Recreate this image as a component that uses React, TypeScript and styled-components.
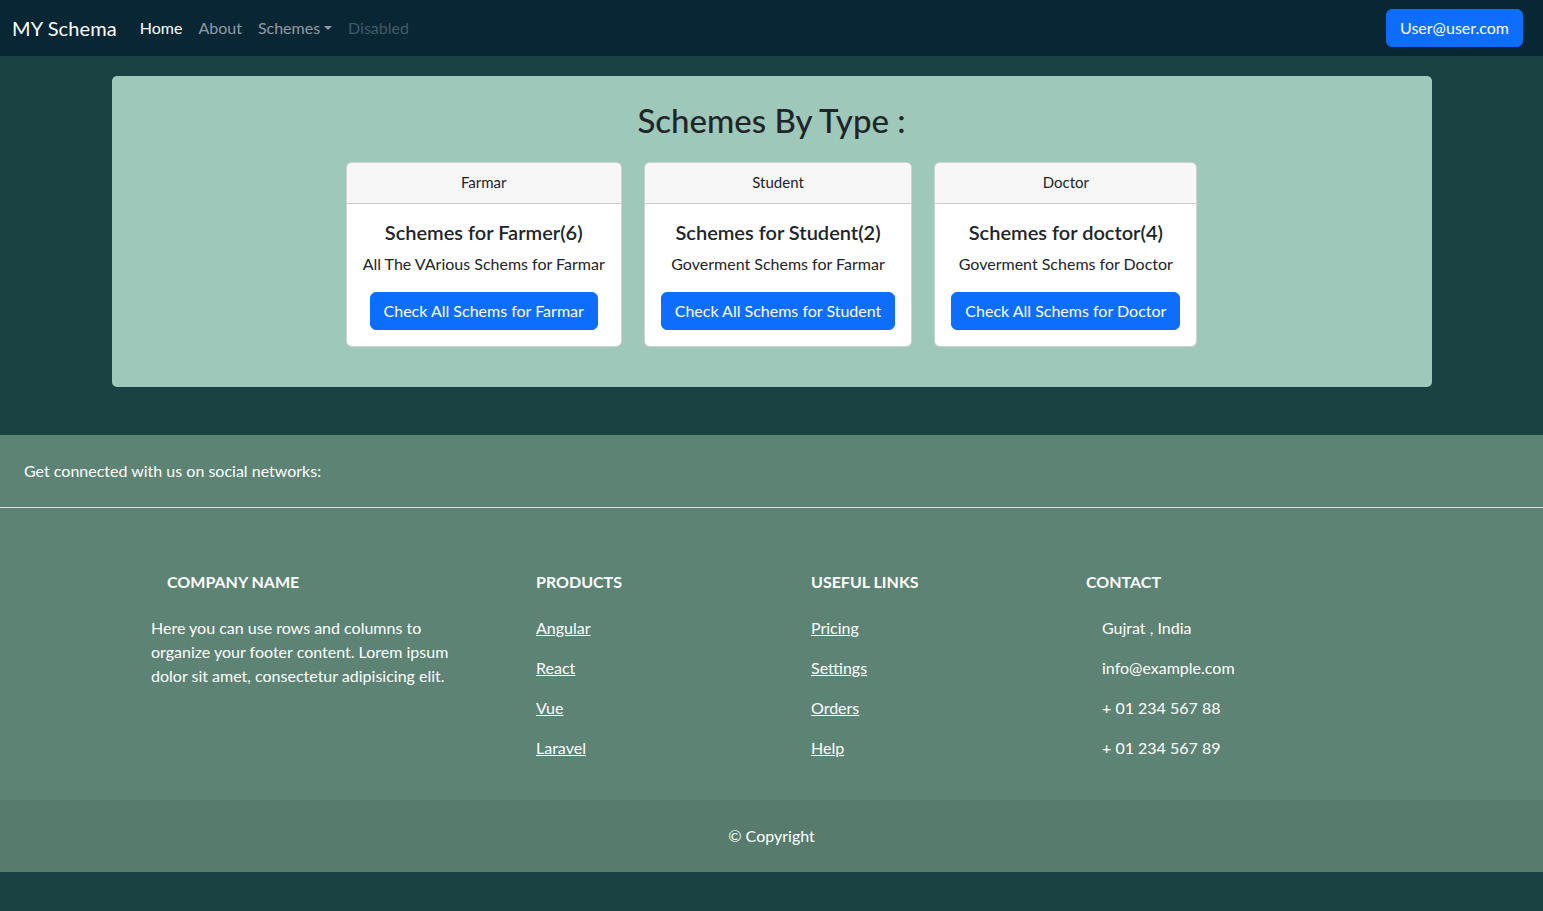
import React from "react";
import styled, { createGlobalStyle } from "styled-components";

const GlobalStyle = createGlobalStyle`
  *, *::before, *::after { box-sizing: border-box; }
  body {
    margin: 0;
    background: #1b4242;
    font-family: "Lato", "Noto Sans", sans-serif;
    font-size: 16px;
    line-height: 1.5;
    color: #212529;
  }
`;

const Page = styled.div`
  min-height: 911px;
  background: #1b4242;
`;

const Navbar = styled.nav`
  height: 56px;
  background: #092635;
  display: flex;
  align-items: center;
  padding: 0 20px 0 12px;
`;

const Brand = styled.a`
  font-size: 20px;
  color: #fff;
  text-decoration: none;
  margin-right: 15px;
  padding: 5px 0;
  letter-spacing: 0.1px;
`;

const NavList = styled.div`
  display: flex;
  align-items: center;
  flex: 1;
`;

const NavLink = styled.a<{ $state?: "active" | "disabled" }>`
  padding: 8px;
  font-size: 16px;
  text-decoration: none;
  color: ${(p) =>
    p.$state === "active"
      ? "#fff"
      : p.$state === "disabled"
      ? "rgba(255,255,255,0.25)"
      : "rgba(255,255,255,0.55)"};
  display: flex;
  align-items: center;
`;

const Caret = styled.span`
  display: inline-block;
  margin-left: 4px;
  border-top: 4.8px solid currentColor;
  border-left: 4px solid transparent;
  border-right: 4px solid transparent;
`;

const PrimaryButton = styled.button`
  background: #0d6efd;
  color: #fff;
  border: 1px solid #0d6efd;
  border-radius: 6px;
  padding: 6px 13px;
  font-family: inherit;
  font-size: 16px;
  line-height: 24px;
  cursor: pointer;
  white-space: nowrap;
`;

const Main = styled.main`
  padding: 20px 0 48px;
`;

const Panel = styled.section`
  width: 1320px;
  margin: 0 auto;
  background: #9ec8b9;
  border-radius: 5px;
  padding: 25px 0 40px;
  display: flex;
  flex-direction: column;
  align-items: center;
  gap: 23px;
`;

const PanelTitle = styled.h2`
  margin: 0;
  font-size: 33px;
  font-weight: 500;
  line-height: 38px;
  color: #212529;
`;

const CardRow = styled.div`
  display: flex;
  gap: 22px;
  justify-content: center;
`;

const Card = styled.div`
  background: #fff;
  border: 1px solid rgba(0, 0, 0, 0.175);
  border-radius: 6px;
  overflow: hidden;
  text-align: center;
`;

const CardHeader = styled.div`
  background: #f7f7f7;
  border-bottom: 1px solid rgba(0, 0, 0, 0.175);
  padding: 7px 16px 9px;
  font-size: 15px;
  line-height: 24px;
`;

const CardBody = styled.div`
  padding: 16px 16px;
  display: flex;
  flex-direction: column;
  align-items: center;
`;

const CardTitle = styled.h5`
  margin: 0 0 8px;
  font-size: 20px;
  font-weight: 600;
  line-height: 24px;
  white-space: nowrap;
`;

const CardText = styled.p`
  margin: 0 0 16px;
  font-size: 16px;
  line-height: 24px;
  white-space: nowrap;
`;

const Footer = styled.footer`
  background: #5c8374;
  color: #fff;
`;

const SocialBar = styled.section`
  padding: 24px;
  border-bottom: 1px solid #dee2e6;
  font-size: 16px;
  line-height: 24px;
`;

const FooterBody = styled.div`
  width: 1320px;
  margin: 48px auto 0;
  padding-top: 16px;
  display: flex;
  justify-content: space-around;
`;

const FooterCol = styled.div<{ $w: number }>`
  width: ${(p) => p.$w}px;
  padding: 0 12px;
  margin-bottom: 24px;
`;

const FooterHeading = styled.h6<{ $indent?: boolean }>`
  margin: 0 0 24px;
  font-size: 16px;
  font-weight: 700;
  line-height: 20px;
  text-transform: uppercase;
  padding-left: ${(p) => (p.$indent ? "16px" : "0")};
`;

const FooterText = styled.p<{ $indent?: boolean }>`
  margin: 0 0 16px;
  font-size: 16px;
  line-height: 24px;
  padding-left: ${(p) => (p.$indent ? "16px" : "0")};
`;

const FooterLink = styled.a`
  color: #fff;
  text-decoration: underline;
`;

const Copyright = styled.div`
  background: rgba(0, 0, 0, 0.05);
  padding: 24px;
  text-align: center;
  font-size: 16px;
  line-height: 24px;
`;

const cards = [
  {
    header: "Farmar",
    title: "Schemes for Farmer(6)",
    text: "All The VArious Schems for Farmar",
    button: "Check All Schems for Farmar",
  },
  {
    header: "Student",
    title: "Schemes for Student(2)",
    text: "Goverment Schems for Farmar",
    button: "Check All Schems for Student",
  },
  {
    header: "Doctor",
    title: "Schemes for doctor(4)",
    text: "Goverment Schems for Doctor",
    button: "Check All Schems for Doctor",
  },
];

export default function App() {
  return (
    <Page>
      <GlobalStyle />
      <Navbar>
        <Brand href="#">MY Schema</Brand>
        <NavList>
          <NavLink $state="active" href="#">Home</NavLink>
          <NavLink href="#">About</NavLink>
          <NavLink href="#">
            Schemes
            <Caret />
          </NavLink>
          <NavLink $state="disabled">Disabled</NavLink>
        </NavList>
        <PrimaryButton>User@user.com</PrimaryButton>
      </Navbar>

      <Main>
        <Panel>
          <PanelTitle>Schemes By Type :</PanelTitle>
          <CardRow>
            {cards.map((c) => (
              <Card key={c.header}>
                <CardHeader>{c.header}</CardHeader>
                <CardBody>
                  <CardTitle>{c.title}</CardTitle>
                  <CardText>{c.text}</CardText>
                  <PrimaryButton>{c.button}</PrimaryButton>
                </CardBody>
              </Card>
            ))}
          </CardRow>
        </Panel>
      </Main>

      <Footer>
        <SocialBar>Get connected with us on social networks:</SocialBar>
        <FooterBody>
          <FooterCol $w={330}>
            <FooterHeading $indent>Company name</FooterHeading>
            <FooterText>
              Here you can use rows and columns to organize your footer content. Lorem ipsum dolor
              sit amet, consectetur adipisicing elit.
            </FooterText>
          </FooterCol>
          <FooterCol $w={220}>
            <FooterHeading>Products</FooterHeading>
            {["Angular", "React", "Vue", "Laravel"].map((l) => (
              <FooterText key={l}>
                <FooterLink href="#">{l}</FooterLink>
              </FooterText>
            ))}
          </FooterCol>
          <FooterCol $w={220}>
            <FooterHeading>Useful links</FooterHeading>
            {["Pricing", "Settings", "Orders", "Help"].map((l) => (
              <FooterText key={l}>
                <FooterLink href="#">{l}</FooterLink>
              </FooterText>
            ))}
          </FooterCol>
          <FooterCol $w={330}>
            <FooterHeading>Contact</FooterHeading>
            {["Gujrat , India", "info@example.com", "+ 01 234 567 88", "+ 01 234 567 89"].map(
              (t) => (
                <FooterText key={t} $indent>
                  {t}
                </FooterText>
              )
            )}
          </FooterCol>
        </FooterBody>
        <Copyright>© Copyright</Copyright>
      </Footer>
    </Page>
  );
}
